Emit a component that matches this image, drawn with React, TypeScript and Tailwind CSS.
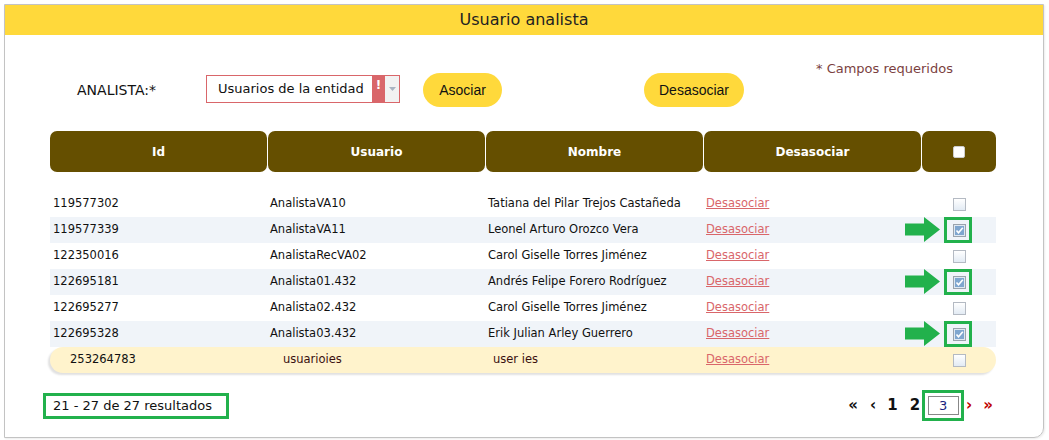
import React from "react";

type Row = {
  id: string;
  usuario: string;
  nombre: string;
  checked?: boolean;
};

const rows: Row[] = [
  { id: "119577302", usuario: "AnalistaVA10", nombre: "Tatiana del Pilar Trejos Castañeda" },
  { id: "119577339", usuario: "AnalistaVA11", nombre: "Leonel Arturo Orozco Vera", checked: true },
  { id: "122350016", usuario: "AnalistaRecVA02", nombre: "Carol Giselle Torres Jiménez" },
  { id: "122695181", usuario: "Analista01.432", nombre: "Andrés Felipe Forero Rodríguez", checked: true },
  { id: "122695277", usuario: "Analista02.432", nombre: "Carol Giselle Torres Jiménez" },
  { id: "122695328", usuario: "Analista03.432", nombre: "Erik Julian Arley Guerrero", checked: true },
];

const font = "font-['Verdana','DejaVu_Sans',sans-serif]";

function Check({ checked }: { checked?: boolean }) {
  if (checked) {
    return (
      <span className="inline-flex h-[13px] w-[13px] items-center justify-center border border-[#9aa3ad] bg-[#dfe8f1]">
        <span className="flex h-[9px] w-[9px] items-center justify-center bg-[#7fa6cf]">
          <svg viewBox="0 0 9 9" className="h-[9px] w-[9px]">
            <path d="M1.5 4.5 L3.5 6.8 L7.8 1.8" fill="none" stroke="#fff" strokeWidth="1.6" />
          </svg>
        </span>
      </span>
    );
  }
  return (
    <span className="inline-block h-[13px] w-[13px] border border-[#b4bac3] bg-gradient-to-b from-[#ffffff] to-[#e3ebf4]" />
  );
}

function GreenArrow() {
  return (
    <svg viewBox="0 0 36 25" className="absolute left-[855px] top-[0px] h-[25px] w-[36px]">
      <path d="M0 6.5 H19 V0 L35 12.5 L19 25 V18.5 H0 Z" fill="#22b14c" />
    </svg>
  );
}

export default function App() {
  return (
    <div className={`h-[440px] w-[1049px] bg-white pl-[4px] pt-[4px] ${font}`}>
      <div className="h-[434px] w-[1040px] rounded-br-[10px] border border-[#c3c3c3] shadow-[1px_1px_2px_rgba(0,0,0,0.08)]">
        <div className="flex h-[30px] items-center justify-center bg-[#ffd93b] text-[16px] text-[#222]">
          Usuario analista
        </div>

        <div className="flex h-[72px] items-start pt-[38px]">
          <div className="ml-[72px] mt-[7px] w-[129px] text-[14px] text-[#111]">ANALISTA:*</div>
          <div className="mt-[2px] flex h-[28px] w-[194px] items-stretch border border-[#d9666a] bg-white">
            <div className="flex flex-1 items-center whitespace-nowrap pl-[11px] text-[13px] text-[#111]">
              Usuarios de la entidad
            </div>
            <div className="flex w-[13px] items-start justify-center bg-[#d9666a] pt-[2px] text-[12px] font-bold leading-[14px] text-white">
              !
            </div>
            <div className="flex w-[14px] items-center justify-center bg-[#f2f2f2]">
              <svg viewBox="0 0 7 4" className="h-[4px] w-[7px]">
                <path d="M0 0 H7 L3.5 4 Z" fill="#a9b4c2" />
              </svg>
            </div>
          </div>
          <button className="ml-[23px] flex h-[34px] w-[79px] items-center justify-center rounded-full bg-[#ffd93b] font-['Liberation_Sans',Arial,sans-serif] text-[14px] text-[#111]">
            Asociar
          </button>
          <button className="ml-[142px] flex h-[34px] w-[100px] items-center justify-center rounded-full bg-[#ffd93b] font-['Liberation_Sans',Arial,sans-serif] text-[14px] text-[#111]">
            Desasociar
          </button>
          <div className="ml-[72px] mt-[-14px] text-[13px] text-[#7b3f3f]">* Campos requeridos</div>
        </div>

        <div className="ml-[45px] mt-[24px] w-[946px]">
          <div className="grid grid-cols-[217px_217px_217px_217px_74px] gap-[1px] text-[12px] font-bold text-white">
            {["Id", "Usuario", "Nombre", "Desasociar"].map((h) => (
              <div key={h} className="flex h-[41px] items-center justify-center rounded-[7px] bg-[#654f00]">
                {h}
              </div>
            ))}
            <div className="flex h-[41px] items-center justify-center rounded-[7px] bg-[#654f00]">
              <span className="inline-block h-[12px] w-[12px] rounded-[2px] border border-[#ccc] bg-white" />
            </div>
          </div>

          <div className="mt-[19px] text-[11.5px] text-[#111]">
            {rows.map((r, i) => (
              <div
                key={r.id}
                className={`relative grid h-[26px] grid-cols-[218px_218px_218px_218px_74px] items-center ${
                  i % 2 === 1 ? "bg-[#f0f4f9]" : "bg-white"
                }`}
              >
                <div className="pl-[3px]">{r.id}</div>
                <div className="pl-[2px]">{r.usuario}</div>
                <div className="pl-[2px]">{r.nombre}</div>
                <div className="pl-[2px]">
                  <span className="text-[#d9666a] underline">Desasociar</span>
                </div>
                <div className="flex justify-center">
                  <Check checked={r.checked} />
                </div>
                {r.checked && (
                  <>
                    <GreenArrow />
                    <div className="absolute left-[894px] top-[0px] h-[26px] w-[28px] border-[3px] border-[#22b14c]" />
                  </>
                )}
              </div>
            ))}
            <div className="grid h-[26px] grid-cols-[218px_218px_218px_218px_74px] items-center rounded-l-full rounded-r-full bg-[#fff3cc] shadow-[-2px_2px_2px_rgba(0,0,0,0.12)]">
              <div className="pl-[20px]">253264783</div>
              <div className="pl-[15px] text-[#3a1010]">usuarioies</div>
              <div className="pl-[7px] text-[#3a1010]">user ies</div>
              <div className="pl-[2px]">
                <span className="text-[#d9666a] underline">Desasociar</span>
              </div>
              <div className="flex justify-center">
                <Check />
              </div>
            </div>
          </div>
        </div>

        <div className="mt-[17px] flex items-center">
          <div className="ml-[38px] flex h-[26px] w-[186px] items-center border-[3px] border-[#22b14c] pl-[7px] text-[13px] text-[#111]">
            21 - 27 de 27 resultados
          </div>
          <div className="ml-auto mr-[50px] flex items-center text-[15px] font-bold">
            <span className="text-[#111]">«</span>
            <span className="ml-[12px] text-[#111]">‹</span>
            <span className="ml-[11px] text-[#111]">1</span>
            <span className="ml-[12px] text-[#111]">2</span>
            <div className="ml-[2px] flex h-[31px] w-[42px] items-center justify-center border-[3px] border-[#22b14c]">
              <div className="flex h-[19px] w-[31px] items-center justify-center border border-[#888] bg-white text-[13px] font-normal text-[#1a237e]">
                3
              </div>
            </div>
            <span className="ml-[2px] text-[#c00000]">›</span>
            <span className="ml-[11px] text-[#c00000]">»</span>
          </div>
        </div>
      </div>
    </div>
  );
}
